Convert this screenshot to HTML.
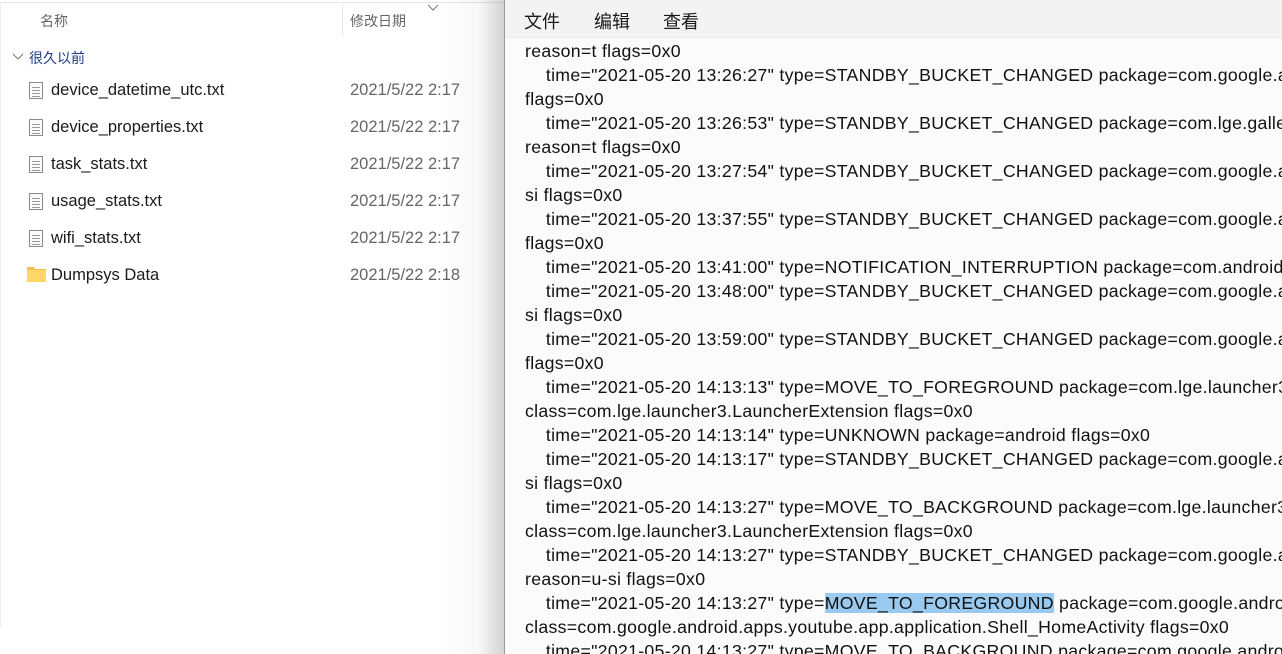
<!DOCTYPE html>
<html><head><meta charset="utf-8"><style>
*{margin:0;padding:0;box-sizing:border-box}
body{width:1282px;height:654px;overflow:hidden;background:#fff;position:relative;font-family:"Liberation Sans","Noto Sans CJK SC",sans-serif}
.left{position:absolute;left:0;top:0;width:505px;height:654px;background:#fff}
.topline{position:absolute;left:0;top:2px;width:505px;height:1px;background:#e5e5e5}
.vline{position:absolute;left:0;top:3px;width:1px;height:625px;background:#eee}
.hdr{position:absolute;top:11px;font-size:14px;color:#666}
.sep{position:absolute;left:342px;top:4px;width:1px;height:32px;background:#e5e5e5}
.grp{position:absolute;left:29px;top:48px;font-size:14px;color:#1e3c8c}
.row{position:absolute;left:0;height:37px;width:505px;font-size:16.5px;color:#1a1a1a}
.row .n{position:absolute;left:51px;top:0}
.row .d{position:absolute;left:350px;top:0;color:#666}
.ico{position:absolute;left:29px;top:1px;width:14px;height:17px;border:1px solid #8a8a8a;background:#fafafa}
.ico i{position:absolute;left:2px;right:2px;height:1px;background:#999}
.shadow{position:absolute;left:440px;top:0;width:65px;height:654px;background:linear-gradient(to right,rgba(0,0,0,0),rgba(0,0,0,0.03) 60%,rgba(0,0,0,0.18))}
.np{position:absolute;left:504px;top:0;width:778px;height:654px;background:#fbfbfb;border-left:1px solid #9a9a9a;overflow:hidden}
.menu{height:38px;background:#f3f3f3;border-bottom:1px solid #e8e8e8;font-size:18px;color:#1a1a1a;position:relative}
.menu span{position:absolute;top:8px}
.txt{position:absolute;left:20px;top:39px;font-size:17.7px;letter-spacing:0.3px;line-height:24px;color:#111;white-space:pre;}
.hl{background:#99c9ef}
</style></head><body>
<div class="left">
<div class="topline"></div><div class="vline"></div>
<div class="hdr" style="left:40px">名称</div>
<div class="sep"></div>
<div class="hdr" style="left:350px">修改日期</div>
<svg style="position:absolute;left:427px;top:4px" width="12" height="8"><path d="M1 1 L6 6 L11 1" stroke="#777" fill="none"/></svg>
<svg style="position:absolute;left:12px;top:53px" width="12" height="8"><path d="M1 1 L6 6 L11 1" stroke="#777" fill="none"/></svg>
<div class="grp">很久以前</div>
<div class="row" style="top:81px"><div class="ico"><i style="top:4px"></i><i style="top:7px"></i><i style="top:10px"></i><i style="top:13px"></i></div><span class="n">device_datetime_utc.txt</span><span class="d">2021/5/22 2:17</span></div>
<div class="row" style="top:118px"><div class="ico"><i style="top:4px"></i><i style="top:7px"></i><i style="top:10px"></i><i style="top:13px"></i></div><span class="n">device_properties.txt</span><span class="d">2021/5/22 2:17</span></div>
<div class="row" style="top:155px"><div class="ico"><i style="top:4px"></i><i style="top:7px"></i><i style="top:10px"></i><i style="top:13px"></i></div><span class="n">task_stats.txt</span><span class="d">2021/5/22 2:17</span></div>
<div class="row" style="top:192px"><div class="ico"><i style="top:4px"></i><i style="top:7px"></i><i style="top:10px"></i><i style="top:13px"></i></div><span class="n">usage_stats.txt</span><span class="d">2021/5/22 2:17</span></div>
<div class="row" style="top:229px"><div class="ico"><i style="top:4px"></i><i style="top:7px"></i><i style="top:10px"></i><i style="top:13px"></i></div><span class="n">wifi_stats.txt</span><span class="d">2021/5/22 2:17</span></div>
<div class="row" style="top:266px"><svg style="position:absolute;left:27px;top:1px" width="19" height="15"><path d="M0 0 H7 L8 2 H19 V15 H0Z" fill="#f2c04c"/><rect x="0" y="3" width="19" height="12" fill="#ffd767"/></svg><span class="n">Dumpsys Data</span><span class="d">2021/5/22 2:18</span></div>
</div>
<div class="shadow"></div>
<div class="np">
<div class="menu"><span style="left:19px">文件</span><span style="left:89px">编辑</span><span style="left:158px">查看</span></div>
<div class="txt">reason=t flags=0x0
    time="2021-05-20 13:26:27" type=STANDBY_BUCKET_CHANGED package=com.google.android
flags=0x0
    time="2021-05-20 13:26:53" type=STANDBY_BUCKET_CHANGED package=com.lge.gallery
reason=t flags=0x0
    time="2021-05-20 13:27:54" type=STANDBY_BUCKET_CHANGED package=com.google.android
si flags=0x0
    time="2021-05-20 13:37:55" type=STANDBY_BUCKET_CHANGED package=com.google.android
flags=0x0
    time="2021-05-20 13:41:00" type=NOTIFICATION_INTERRUPTION package=com.android
    time="2021-05-20 13:48:00" type=STANDBY_BUCKET_CHANGED package=com.google.android
si flags=0x0
    time="2021-05-20 13:59:00" type=STANDBY_BUCKET_CHANGED package=com.google.android
flags=0x0
    time="2021-05-20 14:13:13" type=MOVE_TO_FOREGROUND package=com.lge.launcher3
class=com.lge.launcher3.LauncherExtension flags=0x0
    time="2021-05-20 14:13:14" type=UNKNOWN package=android flags=0x0
    time="2021-05-20 14:13:17" type=STANDBY_BUCKET_CHANGED package=com.google.android
si flags=0x0
    time="2021-05-20 14:13:27" type=MOVE_TO_BACKGROUND package=com.lge.launcher3
class=com.lge.launcher3.LauncherExtension flags=0x0
    time="2021-05-20 14:13:27" type=STANDBY_BUCKET_CHANGED package=com.google.android
reason=u-si flags=0x0
    time="2021-05-20 14:13:27" type=<span class="hl">MOVE_TO_FOREGROUND</span> package=com.google.android
class=com.google.android.apps.youtube.app.application.Shell_HomeActivity flags=0x0
    time="2021-05-20 14:13:27" type=MOVE_TO_BACKGROUND package=com.google.android</div>
</div>
</body></html>
